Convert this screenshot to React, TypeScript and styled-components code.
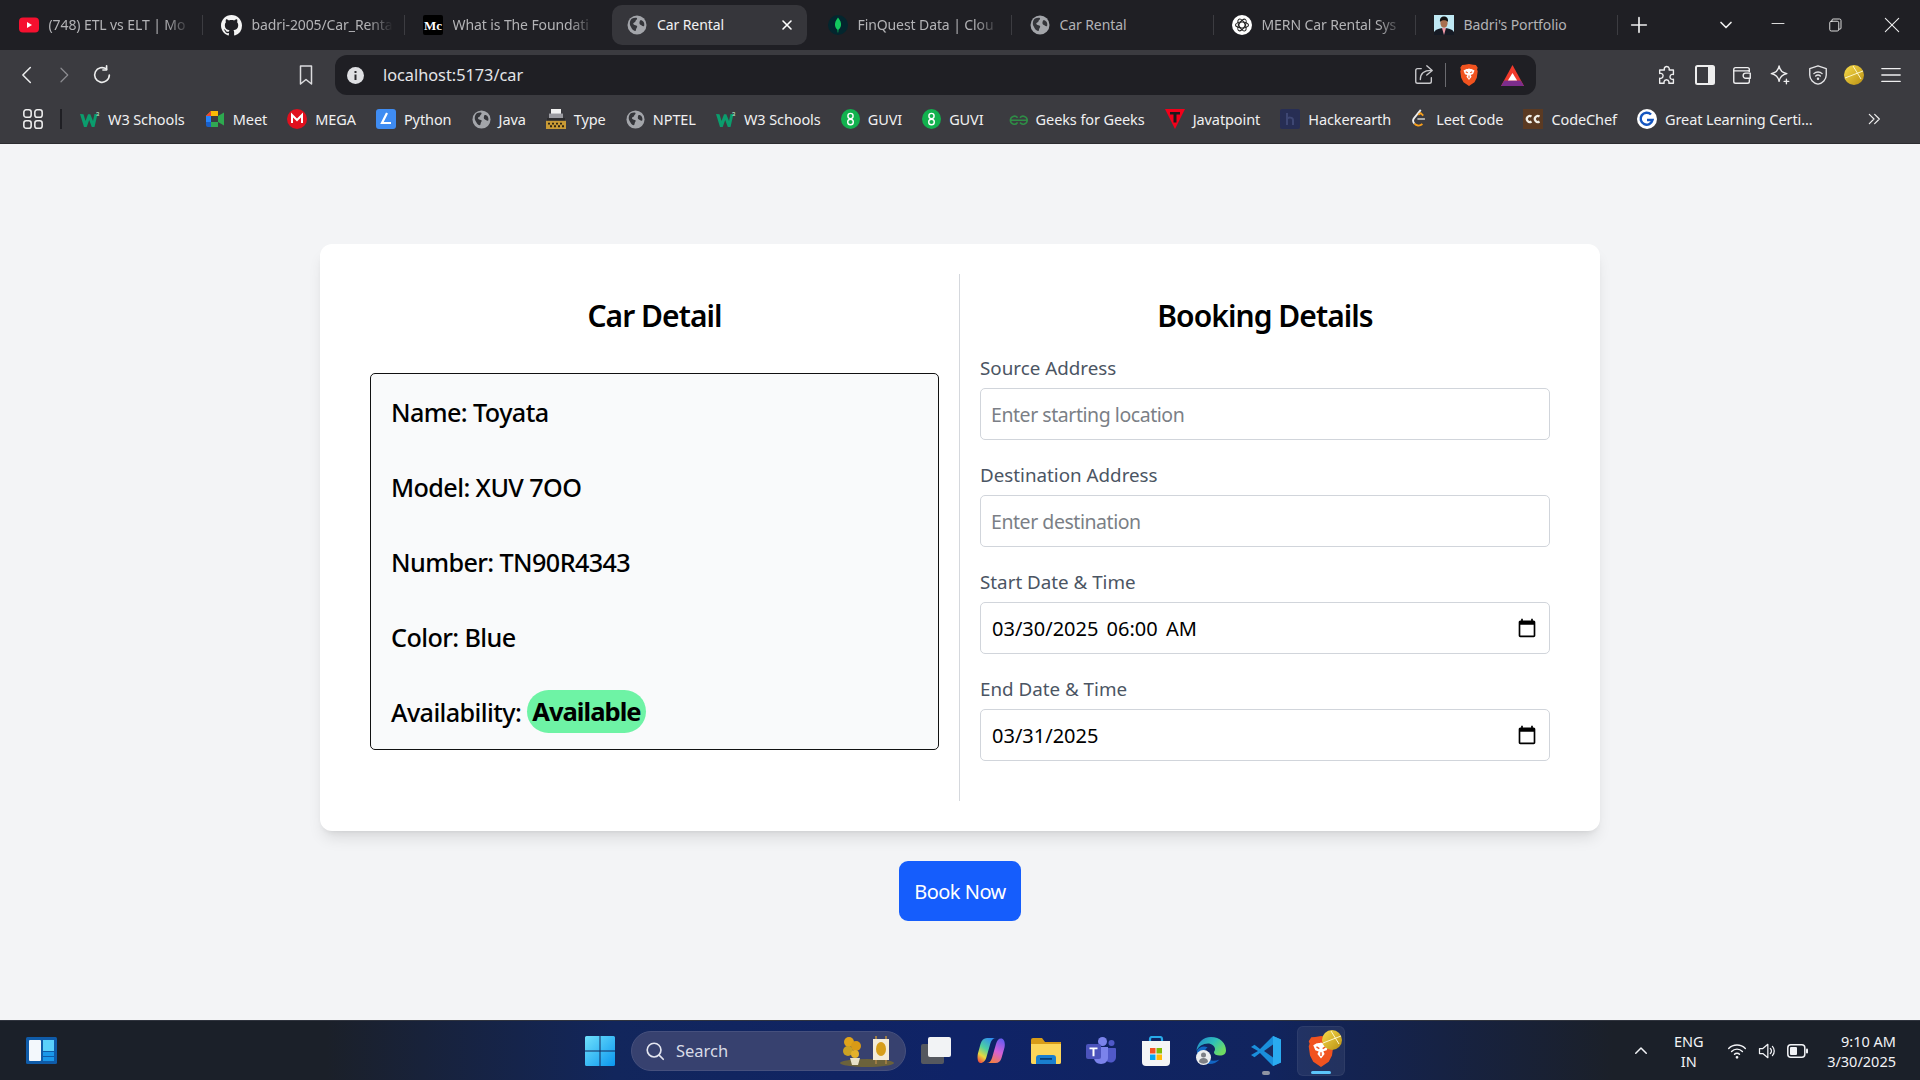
import React from "react";
import styled, { createGlobalStyle } from "styled-components";

const FONT = `"Noto Sans", "Open Sans", sans-serif`;

const Global = createGlobalStyle`
  html, body { margin: 0; padding: 0; background: #f3f4f6; }
  body { font-family: ${FONT}; }
  * { box-sizing: border-box; }
`;

const Shell = styled.div`
  width: 1920px;
  height: 1080px;
  display: flex;
  flex-direction: column;
  overflow: hidden;
`;

/* ---------- tab strip ---------- */
const TabStrip = styled.div`
  height: 50px;
  background: #1f1f24;
  display: flex;
  align-items: center;
  padding-left: 1px;
  flex: none;
`;
const Tab = styled.div<{ $active?: boolean; $noSep?: boolean }>`
  width: ${(p) => (p.$active ? "195px" : "202px")};
  margin: ${(p) => (p.$active ? "0 3px 0 5px" : "0")};
  height: 40px;
  flex: none;
  display: flex;
  align-items: center;
  gap: 10px;
  padding: 0 12px 0 ${(p) => (p.$active ? "15px" : "17.5px")};
  position: relative;
  border-radius: 10px;
  background: ${(p) => (p.$active ? "#36363b" : "transparent")};
  color: ${(p) => (p.$active ? "#f2f2f3" : "#b3b3b6")};
  &::after {
    content: "";
    display: ${(p) => (p.$active || p.$noSep ? "none" : "block")};
    position: absolute;
    right: 0;
    top: 10px;
    width: 1px;
    height: 20px;
    background: #3c3c41;
  }
`;
const TabTitle = styled.span<{ $fade?: boolean }>`
  flex: 1;
  min-width: 0;
  margin-top: -2px;
  white-space: nowrap;
  overflow: hidden;
  font-size: 14px;
  letter-spacing: -0.1px;
  mask-image: ${(p) => (p.$fade ? "linear-gradient(90deg,#000 82%,transparent 100%)" : "none")};
`;
const TabClose = styled.span`
  display: flex;
`;
const NewTab = styled.div`
  margin-left: 10px;
  display: flex;
`;
const StripRight = styled.div`
  margin-left: auto;
  display: flex;
  align-items: center;
  color: #e8e8ea;
`;
const WinBtn = styled.div<{ $w: number }>`
  width: ${(p) => p.$w}px;
  display: flex;
  justify-content: center;
`;

/* ---------- toolbar ---------- */
const Toolbar = styled.div`
  height: 50px;
  flex: none;
  background: #3b3b40;
  display: flex;
  align-items: center;
  padding-left: 17px;
`;
const NavGroup = styled.div`
  display: flex;
  align-items: center;
  gap: 18px;
`;
const BookmarkBtn = styled.div`
  margin-left: 181px;
  display: flex;
`;
const Omnibox = styled.div`
  margin-left: 17px;
  width: 1201px;
  height: 40px;
  background: #1f1f24;
  border-radius: 12px;
  display: flex;
  align-items: center;
  padding: 0 12px 0 12px;
`;
const Url = styled.span`
  margin: -1px 0 0 19px;
  color: #e4e5e8;
  font-size: 16.3px;
  flex: 1;
`;
const OmniSep = styled.span`
  width: 1px;
  height: 24px;
  background: #6a6a6f;
  margin: 0 13px 0 10px;
`;
const OmniGap = styled.span`
  width: 22px;
`;
const ToolRight = styled.div`
  margin-left: 120px;
  display: flex;
  align-items: center;
  gap: 15.7px;
`;

/* ---------- bookmarks ---------- */
const BookmarkBar = styled.div`
  height: 44px;
  flex: none;
  background: #3b3b40;
  border-bottom: 1px solid #2c2c30;
  display: flex;
  align-items: center;
  padding: 0 38px 5px 22px;
  color: #f0f0f1;
`;
const BarSep = styled.span`
  width: 2px;
  height: 20px;
  background: #1f1f24;
  margin: 0 18px 0 16px;
`;
const BookmarkList = styled.div`
  display: flex;
  align-items: center;
  gap: 20.1px;
`;
const Bookmark = styled.div`
  display: flex;
  align-items: center;
  gap: 8px;
  font-size: 14.5px;
  letter-spacing: -0.1px;
  white-space: nowrap;
`;
const More = styled.div`
  margin-left: auto;
  display: flex;
`;

/* ---------- page ---------- */
const Page = styled.main`
  flex: 1;
  background: #f3f4f6;
  display: flex;
  flex-direction: column;
  align-items: center;
  padding-top: 100px;
`;
const Card = styled.section`
  width: 1280px;
  height: 587px;
  padding: 30px;
  background: #fff;
  border-radius: 12px;
  box-shadow: 0 10px 15px -3px rgba(0, 0, 0, 0.1), 0 4px 6px -4px rgba(0, 0, 0, 0.1);
  display: grid;
  grid-template-columns: 1fr 1fr;
`;
const Column = styled.div<{ $divider?: boolean }>`
  padding: 0 20px;
  border-right: ${(p) => (p.$divider ? "1px solid #d5d8dd" : "none")};
`;
const Heading = styled.h2<{ $gap: number }>`
  margin: 20px 0 ${(p) => p.$gap}px;
  height: 43px;
  line-height: 43px;
  text-align: center;
  font-size: 30px;
  font-weight: 600;
  letter-spacing: -0.95px;
  color: #000;
`;
const DetailBox = styled.div`
  height: 377px;
  background: #f9fafb;
  border: 1.5px solid #111;
  border-radius: 5px;
  padding: 0 20px;
  display: grid;
  grid-auto-rows: 75px;
`;
const DetailRow = styled.p`
  margin: 0;
  display: flex;
  align-items: center;
  gap: 6px;
  font-size: 25.2px;
  font-weight: 500;
  letter-spacing: -0.6px;
  color: #000;
`;
const Badge = styled.span`
  background: #6ef3a5;
  border-radius: 22px;
  height: 43px;
  display: flex;
  align-items: center;
  padding: 0 5px;
  font-weight: 700;
  font-size: 25.6px;
  letter-spacing: -1px;
`;
const Field = styled.div`
  margin-bottom: 23px;
`;
const Label = styled.label`
  display: block;
  height: 24px;
  line-height: 24px;
  margin-bottom: 8px;
  font-size: 18.8px;
  color: #4b5563;
`;
const TextInput = styled.input`
  width: 100%;
  height: 52px;
  border: 1px solid #d1d5db;
  border-radius: 5px;
  background: #fff;
  padding: 0 10px;
  font: 19.5px ${FONT};
  letter-spacing: -0.45px;
  outline: none;
  &::placeholder {
    color: #7b7f86;
    opacity: 1;
  }
`;
const DateField = styled.div`
  width: 100%;
  height: 52px;
  border: 1px solid #d1d5db;
  border-radius: 5px;
  background: #fff;
  padding: 0 12px 0 11px;
  display: flex;
  align-items: center;
  justify-content: space-between;
  font-size: 20px;
  word-spacing: 3px;
  color: #000;
`;
const BookButton = styled.button`
  margin-top: 30px;
  width: 122px;
  height: 60px;
  background: #155dfc;
  color: #fff;
  border: none;
  border-radius: 9px;
  font: 20px ${FONT};
  letter-spacing: -0.5px;
`;

/* ---------- taskbar ---------- */
const Taskbar = styled.footer`
  height: 60px;
  flex: none;
  display: flex;
  align-items: center;
  border-top: 1px solid #30343e;
  background: linear-gradient(90deg, #1b2029 0, #1b2029 17%, #12265c 32%, #0f2367 50%, #11245e 66%, #1b2029 84%, #1b2029 100%);
  padding-left: 26px;
  color: #f2f3f6;
`;
const Windows = styled.div`
  margin-left: 528px;
  display: flex;
`;
const SearchPill = styled.div`
  margin-left: 16px;
  width: 275px;
  height: 40px;
  border-radius: 20px;
  background: #37416f;
  border: 1px solid #46507d;
  display: flex;
  align-items: center;
  padding: 0 10px 0 12px;
  gap: 10px;
  font-size: 16.5px;
  color: #d9dbe6;
`;
const SearchText = styled.span`
  flex: 1;
`;
const TaskApps = styled.div`
  margin-left: 15px;
  display: flex;
  align-items: center;
  gap: 25px;
`;
const ActiveApp = styled.div`
  width: 48px;
  height: 50px;
  margin-left: -9px;
  border-radius: 6px;
  background: rgba(255, 255, 255, 0.07);
  border: 1px solid rgba(255, 255, 255, 0.05);
  display: flex;
  align-items: flex-start;
  justify-content: center;
  padding-top: 9px;
  position: relative;
`;
const RunningDot = styled.span<{ $active?: boolean }>`
  position: absolute;
  bottom: ${(p) => (p.$active ? "1px" : "-9px")};
  left: 50%;
  transform: translateX(-50%);
  width: ${(p) => (p.$active ? "20px" : "8px")};
  height: ${(p) => (p.$active ? "3px" : "4px")};
  border-radius: 3px;
  background: ${(p) => (p.$active ? "#5cc5fb" : "#8e94a3")};
`;
const AppSlot = styled.div<{ $ml?: number }>`
  position: relative;
  display: flex;
  margin-left: ${(p) => p.$ml ?? 0}px;
`;
const Tray = styled.div`
  margin-left: auto;
  padding-right: 24px;
  display: flex;
  align-items: center;
`;
const Lang = styled.div`
  margin-left: 24px;
  text-align: center;
  font-size: 14.5px;
  line-height: 20px;
`;
const TrayIcons = styled.div`
  margin-left: 23px;
  display: flex;
  align-items: center;
  gap: 10px;
`;
const Clock = styled.div`
  margin-left: 19.5px;
  text-align: right;
  font-size: 14.5px;
  line-height: 20px;
`;
const BallOverlay = styled.span`
  position: absolute;
  left: 24px;
  top: 3px;
  display: flex;
`;

/* ---------- icons ---------- */
type P = { s?: number };
const Stroke = ({ s = 22, children, w = 1.6, c = "currentColor" }: { s?: number; children: React.ReactNode; w?: number; c?: string }) => (
  <svg width={s} height={s} viewBox="0 0 24 24" fill="none" stroke={c} strokeWidth={w} strokeLinecap="round" strokeLinejoin="round">
    {children}
  </svg>
);
const Globe = ({ s = 20 }: P) => (
  <svg width={s} height={s} viewBox="0 0 20 20">
    <circle cx="10" cy="10" r="9.5" fill="#a3a5aa" />
    <path d="M5 3.5c1.5-.8 3-1 4.5-.8 1 .6.6 1.7-.3 2.3-.9.7-.4 1.8-1.5 2.2-1.4.4-1.9 1.4-1 2.3 1 .9 2.5.5 3.3 1.4.6.8-.3 1.8-.7 2.6-.4 1-.2 2.2-1 2.6C5.5 15.7 4.7 13 3.6 11.3 2.4 9.3 2.5 5.6 5 3.5z" fill="#34353a" />
    <path d="M13 5.5c1.3-.5 2.6.2 3.5 1.3.8 1.3 1 2.8.6 4.2-.8.5-1.7.1-2.4-.5-.9-.7-1.9-.7-2.2-1.9-.2-1 .2-2.3.5-3.1z" fill="#34353a" />
  </svg>
);
const YouTube = () => (
  <svg width="20" height="20" viewBox="0 0 20 20">
    <rect y="2.5" width="20" height="15" rx="4" fill="#f5102f" />
    <path d="M8 7l5 3-5 3z" fill="#fff" />
  </svg>
);
const GitHub = () => (
  <svg width="21" height="21" viewBox="0 0 16 16" fill="#f4f4f4">
    <path d="M8 0C3.58 0 0 3.58 0 8c0 3.54 2.29 6.53 5.47 7.59.4.07.55-.17.55-.38 0-.19-.01-.82-.01-1.49-2.01.37-2.53-.49-2.69-.94-.09-.23-.48-.94-.82-1.13-.28-.15-.68-.52-.01-.53.63-.01 1.08.58 1.23.82.72 1.21 1.87.87 2.33.66.07-.52.28-.87.51-1.07-1.78-.2-3.64-.89-3.64-3.95 0-.87.31-1.59.82-2.15-.08-.2-.36-1.02.08-2.12 0 0 .67-.21 2.2.82.64-.18 1.32-.27 2-.27s1.36.09 2 .27c1.53-1.04 2.2-.82 2.2-.82.44 1.1.16 1.92.08 2.12.51.56.82 1.27.82 2.15 0 3.07-1.87 3.75-3.65 3.95.29.25.54.73.54 1.48 0 1.07-.01 1.93-.01 2.2 0 .21.15.46.55.38A8.01 8.01 0 0 0 16 8c0-4.42-3.58-8-8-8z" />
  </svg>
);
const Medium = () => (
  <svg width="20" height="20" viewBox="0 0 20 20">
    <rect width="20" height="20" rx="2" fill="#000" />
    <text x="1" y="15" fontSize="13" fontWeight="700" fill="#fff" fontFamily="Liberation Serif">Mc</text>
  </svg>
);
const Mongo = () => (
  <svg width="20" height="20" viewBox="0 0 20 20">
    <circle cx="10" cy="10" r="10" fill="#03262e" />
    <path d="M10 2.5c2.5 3 3.3 5.3 3 7.8-.3 2.3-1.5 3.7-2.6 4.5l-.2 2.7h-.5l-.2-2.7C8.4 14 7.2 12.6 7 10.3c-.2-2.5.6-4.8 3-7.8z" fill="#12c95e" />
  </svg>
);
const OpenAIish = () => (
  <svg width="20" height="20" viewBox="0 0 20 20">
    <circle cx="10" cy="10" r="10" fill="#fff" />
    <g fill="none" stroke="#222" strokeWidth="1.1">
      <ellipse cx="10" cy="10" rx="6.5" ry="3" />
      <ellipse cx="10" cy="10" rx="6.5" ry="3" transform="rotate(60 10 10)" />
      <ellipse cx="10" cy="10" rx="6.5" ry="3" transform="rotate(120 10 10)" />
    </g>
  </svg>
);
const Portrait = () => (
  <svg width="20" height="20" viewBox="0 3 20 20">
    <rect y="3" width="20" height="20" fill="#bfe8f4" />
    <path d="M0 23v-3c2-3 6-4 10-4s8 1 10 4v3z" fill="#151a24" />
    <path d="M8 16l2 7 2-7z" fill="#f09aa8" />
    <ellipse cx="10" cy="11" rx="3.6" ry="4.8" fill="#a86f4f" />
    <path d="M6 10c-.5-4 1.5-5.5 4-5.5s4.5 1.5 4 5.5c-1.5-2.5-6.5-2.5-8 0z" fill="#111" />
  </svg>
);
const Brave = ({ w = 20, h = 22 }: { w?: number; h?: number }) => (
  <svg width={w} height={h} viewBox="0 0 20 24">
    <path d="M10 0l4.5.7 3 .3 2 3-.7 2 .7 2-1 7-2.5 5L10 24l-6-4-2.5-5-1-7 .7-2-.7-2 2-3 3-.3z" fill="#f1531f" />
    <path d="M10 5c1 .7 2.3.3 3.3.7l2.7 1.5-1.6 3.8-2.6.9 1 2L10 17.5 7.2 14l1-2-2.6-.9L4 7.2l2.7-1.5c1-.4 2.3 0 3.3-.7z" fill="#fff" />
    <path d="M10 12.5v3M6.5 8.5l2.2 1.2M13.5 8.5l-2.2 1.2" stroke="#f1531f" strokeWidth="1.1" fill="none" />
  </svg>
);
const BatTriangle = () => (
  <svg width="23" height="21" viewBox="0 0 23 21">
    <path d="M11.5 0L23 21H0z" fill="#f13a2c" />
    <path d="M0 21h23l-3.3-5.5H3.3z" fill="#7c2d8c" />
    <path d="M11.5 8l4.6 7.5H6.9z" fill="#fff" />
  </svg>
);
const W3 = () => (
  <svg width="20" height="20" viewBox="0 0 20 20">
    <path d="M0 5l3.5.3L5.5 12 8 5.3h2.3L13 12l1.5-7H17.5L14.5 18h-2.7L9.2 11l-2.5 7H4z" fill="#0b9d6d" />
    <text x="16" y="7" fontSize="6" fill="#cfd" fontFamily="Liberation Sans">3</text>
  </svg>
);
const Meet = () => (
  <svg width="20" height="20" viewBox="0 0 20 20">
    <path d="M6 2h7v5H1l5-5z" fill="#f9bb06" />
    <path d="M1 7h5v6H1z" fill="#2684fc" />
    <path d="M1 13h5v5H3a2 2 0 0 1-2-2z" fill="#1a5fc7" />
    <path d="M6 13h7v5H6z" fill="#30a852" />
    <path d="M13 7l6-3.5v13L13 13z" fill="#2da94f" />
    <path d="M1 7l5-5v5z" fill="#ea4335" />
  </svg>
);
const Mega = () => (
  <svg width="20" height="20" viewBox="0 0 20 20">
    <circle cx="10" cy="10" r="10" fill="#e0101e" />
    <path d="M5 14V6l5 5 5-5v8" fill="none" stroke="#fff" strokeWidth="2" />
  </svg>
);
const Python = () => (
  <svg width="20" height="20" viewBox="0 0 20 20">
    <rect width="20" height="20" rx="3" fill="#3f8cf2" />
    <path d="M11 4L6 14h9" fill="none" stroke="#fff" strokeWidth="2.2" />
  </svg>
);
const Typewriter = () => (
  <svg width="20" height="20" viewBox="0 0 20 22" preserveAspectRatio="none">
    <path d="M5 0h10v6H5z" fill="#f1f1f1" />
    <path d="M3 5h14v5H3z" fill="#9a9aa0" />
    <path d="M1 10h18v3H1z" fill="#2c2c2e" />
    <path d="M0 13h20v9H0z" fill="#c89a35" />
    <path d="M2 15h2v2H2zM6 15h2v2H6zM10 15h2v2h-2zM14 15h2v2h-2zM4 18h2v2H4zM8 18h2v2H8zM12 18h2v2h-2zM16 18h2v2h-2z" fill="#2f2614" />
  </svg>
);
const Guvi = () => (
  <svg width="19" height="20" viewBox="0 0 19 20">
    <ellipse cx="9.5" cy="10" rx="9.5" ry="10" fill="#12b14e" />
    <circle cx="9.5" cy="7" r="2.6" fill="none" stroke="#fff" strokeWidth="1.4" />
    <circle cx="9.5" cy="13" r="2.8" fill="none" stroke="#fff" strokeWidth="1.4" />
  </svg>
);
const Gfg = () => (
  <svg width="24" height="20" viewBox="-6.5 -2 30 25" fill="none" stroke="#2f8d46" strokeWidth="2">
    <path d="M1 12h22M1.5 12a5 5 0 0 1 9-3M1.5 12a5 5 0 0 0 9 3M22.5 12a5 5 0 0 0-9-3M22.5 12a5 5 0 0 1-9 3" />
  </svg>
);
const Jt = () => (
  <svg width="20" height="20" viewBox="0 0 20 20">
    <path d="M0 0h20L10 20z" fill="#f3001a" />
    <path d="M5 3h10v2.5h-3.5v8h-3v-8H5z" fill="#1a1a1c" />
  </svg>
);
const Hacker = () => (
  <svg width="20" height="20" viewBox="0 0 20 20">
    <rect width="20" height="20" rx="2" fill="#272e54" />
    <path d="M7 4v12M7 10c1-2 6-2 6 1v5" fill="none" stroke="#3e4773" strokeWidth="2" />
  </svg>
);
const Leet = () => (
  <svg width="17" height="20" viewBox="0 0 19 24" fill="none" strokeWidth="2.2">
    <path d="M11 1L3 11c-2 2.5-1 5 .5 6.5" stroke="#eee" />
    <path d="M7 12h9" stroke="#b5b5b5" />
    <path d="M3.5 17.5c2 2.5 6 3.5 9.5.5" stroke="#f89f1b" />
    <path d="M8 7l3-2 3 3" stroke="#f89f1b" />
  </svg>
);
const CodeChef = () => (
  <svg width="20" height="20" viewBox="0 0 20 20">
    <rect width="20" height="20" fill="#5b3a22" />
    <path d="M8.5 7.5a3 3 0 1 0 0 5M16.5 7.5a3 3 0 1 0 0 5" fill="none" stroke="#f1efe8" strokeWidth="2.2" />
  </svg>
);
const Great = () => (
  <svg width="20" height="20" viewBox="0 0 20 20">
    <circle cx="10" cy="10" r="10" fill="#fff" />
    <path d="M14 5.5a6 6 0 1 0 1.5 5.5H10" fill="none" stroke="#1556c0" strokeWidth="2.5" />
  </svg>
);
const Calendar = () => (
  <svg width="20" height="20" viewBox="0 0 24 24" fill="#000">
    <path d="M20 3h-1V1h-2v2H7V1H5v2H4c-1.1 0-2 .9-2 2v16c0 1.1.9 2 2 2h16c1.1 0 2-.9 2-2V5c0-1.1-.9-2-2-2zm0 18H4V8h16v13z" />
  </svg>
);
const WidgetsIcon = () => (
  <svg width="31" height="27" viewBox="0 0 31 27">
    <rect width="31" height="27" rx="1.5" fill="#0f5ba8" />
    <rect x="3" y="3" width="12" height="21" rx="1" fill="#f3f8fc" />
    <rect x="17" y="3" width="11" height="11" fill="#5ad0fb" />
    <rect x="17" y="15" width="11" height="4" fill="#1a98ea" />
    <rect x="17" y="20" width="11" height="4" fill="#1a98ea" />
  </svg>
);
const WinLogo = () => (
  <svg width="30" height="30" viewBox="0 0 30 30">
    <defs>
      <linearGradient id="wl" x1="0" y1="0" x2="1" y2="1">
        <stop offset="0" stopColor="#6fe0fb" />
        <stop offset="1" stopColor="#0a97ef" />
      </linearGradient>
    </defs>
    <path d="M0 1.5A1.5 1.5 0 0 1 1.5 0H14.5v14.5H0zM15.5 0h13A1.5 1.5 0 0 1 30 1.5v13H15.5zM0 15.5h14.5V30H1.5A1.5 1.5 0 0 1 0 28.5zM15.5 15.5H30v13a1.5 1.5 0 0 1-1.5 1.5h-13z" fill="url(#wl)" />
  </svg>
);
const Sunflowers = () => (
  <svg width="56" height="36" viewBox="0 0 56 36">
    <ellipse cx="28" cy="30" rx="27" ry="4" fill="#6b623b" />
    <circle cx="10" cy="9" r="5" fill="#e0a31a" />
    <circle cx="17" cy="13" r="5" fill="#d89a17" />
    <circle cx="9" cy="18" r="5" fill="#caa123" />
    <circle cx="16" cy="21" r="4" fill="#e2b02a" />
    <path d="M11 25h10l-2 7h-6z" fill="#e7e1c8" />
    <path d="M36 3h2v28h-2zM46 3h2v28h-2z" fill="#9c7b44" />
    <rect x="34" y="6" width="16" height="21" fill="#f3ecd8" />
    <ellipse cx="42" cy="16" rx="5" ry="7" fill="#d69e1a" />
  </svg>
);
const TaskView = () => (
  <svg width="30" height="27" viewBox="0 0 30 27">
    <rect x="0" y="7" width="23" height="20" rx="2" fill="#55585f" />
    <rect x="7" y="0" width="23" height="20" rx="2" fill="#f2f3f5" />
  </svg>
);
const Copilot = () => (
  <svg width="28" height="25" viewBox="0 0 28 25">
    <defs>
      <linearGradient id="co" x1="0.7" y1="0" x2="0.2" y2="1">
        <stop offset="0" stopColor="#2f8ff0" />
        <stop offset=".45" stopColor="#4fd0a0" />
        <stop offset=".75" stopColor="#e8d83f" />
        <stop offset="1" stopColor="#f0553f" />
      </linearGradient>
      <linearGradient id="co2" x1="0.7" y1="0" x2="0.3" y2="1">
        <stop offset="0" stopColor="#6a5cf0" />
        <stop offset=".5" stopColor="#d460d8" />
        <stop offset="1" stopColor="#f2803f" />
      </linearGradient>
    </defs>
    <path d="M10 0h9c-3 0-4.5 2-5.5 5l-4 14c-1 3.5-3 6-6 6C1 25 0 21 .8 16L3.5 6C4.5 2 7 0 10 0z" fill="url(#co)" />
    <path d="M18 25H9.5c3 0 4.5-2 5.5-5l4-14c1-3.5 2.500-5.500 5-5.500 3 0 4.500 4 3.500 9l-3 10.500c-1 3.500-3 5-6 5z" fill="url(#co2)" />
  </svg>
);
const Explorer = () => (
  <svg width="30" height="26" viewBox="0 0 30 26">
    <path d="M0 2a2 2 0 0 1 2-2h9l3 4h16v20a2 2 0 0 1-2 2H2a2 2 0 0 1-2-2z" fill="#d89c18" />
    <path d="M0 6h30v18a2 2 0 0 1-2 2H2a2 2 0 0 1-2-2z" fill="#fcd65a" />
    <path d="M5 26v-6a3 3 0 0 1 3-3h14a3 3 0 0 1 3 3v6z" fill="#1a7fcf" />
    <rect x="9" y="20" width="12" height="1.8" fill="#063f78" />
  </svg>
);
const Teams = () => (
  <svg width="30" height="27" viewBox="0 0 30 27">
    <circle cx="16.5" cy="4.5" r="4.5" fill="#7b83eb" />
    <circle cx="25.5" cy="6" r="3" fill="#5059c9" />
    <path d="M19 11h10a1 1 0 0 1 1 1v8c0 3.5-2.5 5.5-5.5 5.5-2 0-4-1-5-3z" fill="#5059c9" />
    <path d="M8 10h14v11c0 3-3 6-7 6-4 0-7-3-7-6z" fill="#7b83eb" />
    <rect y="7" width="15" height="15" rx="2" fill="#4b53bc" />
    <path d="M3.5 10.5h8v1.8H8.5v7h-2v-7h-3z" fill="#fff" />
  </svg>
);
const Store = () => (
  <svg width="30" height="30" viewBox="0 0 30 30">
    <path d="M9 5V3a2 2 0 0 1 2-2h8a2 2 0 0 1 2 2v2" fill="none" stroke="#27a9e8" strokeWidth="2.2" />
    <path d="M1 5h28v21a4 4 0 0 1-4 4H5a4 4 0 0 1-4-4z" fill="#f4f5f6" />
    <path d="M9 12h5.5v5.5H9z" fill="#f35325" />
    <path d="M15.5 12H21v5.5h-5.5z" fill="#81bc06" />
    <path d="M9 18.5h5.5V24H9z" fill="#05a6f0" />
    <path d="M15.5 18.5H21V24h-5.5z" fill="#ffba08" />
  </svg>
);
const Edge = () => (
  <svg width="30" height="28" viewBox="0 0 30 28">
    <defs>
      <linearGradient id="ed" x1="0" y1="0" x2="1" y2="0.6">
        <stop offset="0" stopColor="#1f80d0" />
        <stop offset=".55" stopColor="#2fc0b8" />
        <stop offset="1" stopColor="#6fdc62" />
      </linearGradient>
    </defs>
    <path d="M15 0C24 0 30 6 30 13.5c0 3-2 5-6.5 5-3 0-5.5-1-5.5-3 0-1.5 1-1.5 1-3.5 0-3-3.5-5.5-7-5.500C7 6.500 2 9.500.5 14 1 6 7 0 15 0z" fill="url(#ed)" />
    <path d="M1 14c1-3 4-4.500 7-4.500 2.500 0 3.500 1 3.500 1-3 2-3.500 6-2 9 2 4 8 5.500 14 3-3 3-6 4.500-10 4.500C6 28 .5 22 1 14z" fill="#1266c4" />
    <circle cx="7.5" cy="20.5" r="7.5" fill="#eceef0" />
    <circle cx="7.5" cy="18" r="2.5" fill="#7d8086" />
    <path d="M3 25c0-3 2-4 4.5-4s4.5 1 4.5 4a7 7 0 0 1-9 0z" fill="#7d8086" />
  </svg>
);
const VSCode = () => (
  <svg width="30" height="30" viewBox="0 0 30 30">
    <path d="M22 0l8 3.5v23L22 30 9 17l-5.5 4.3L0 19l7-4-7-4 3.5-2.3L9 13z" fill="#1a8fdc" />
    <path d="M22 8.5L13 15l9 6.5z" fill="#1b2a5e" />
    <path d="M22 0l8 3.5v23L22 30z" fill="#2aabf0" />
  </svg>
);
const GoldBall = ({ s = 20 }: P) => (
  <svg width={s} height={s} viewBox="0 0 20 20">
    <defs>
      <linearGradient id="gb" x1="0" y1="0" x2="1" y2="1">
        <stop offset="0" stopColor="#f8dc4b" />
        <stop offset="1" stopColor="#b98f12" />
      </linearGradient>
    </defs>
    <circle cx="10" cy="10" r="10" fill="url(#gb)" />
    <path d="M1 13L19 6M9 1l8 13" stroke="#fdf6c8" strokeWidth="1" fill="none" />
  </svg>
);

const tabs: { t: string; i: React.ReactNode; active?: boolean; fade?: boolean; noSep?: boolean }[] = [
  { t: "(748) ETL vs ELT | Mo", i: <YouTube />, fade: true },
  { t: "badri-2005/Car_Renta", i: <GitHub />, fade: true },
  { t: "What is The Foundati", i: <Medium />, fade: true, noSep: true },
  { t: "Car Rental", i: <Globe />, active: true },
  { t: "FinQuest Data | Clou", i: <Mongo />, fade: true },
  { t: "Car Rental", i: <Globe /> },
  { t: "MERN Car Rental Sys", i: <OpenAIish />, fade: true },
  { t: "Badri's Portfolio", i: <Portrait /> },
];

const bookmarks: { t: string; i: React.ReactNode }[] = [
  { t: "W3 Schools", i: <W3 /> },
  { t: "Meet", i: <Meet /> },
  { t: "MEGA", i: <Mega /> },
  { t: "Python", i: <Python /> },
  { t: "Java", i: <Globe s={19} /> },
  { t: "Type", i: <Typewriter /> },
  { t: "NPTEL", i: <Globe s={19} /> },
  { t: "W3 Schools", i: <W3 /> },
  { t: "GUVI", i: <Guvi /> },
  { t: "GUVI", i: <Guvi /> },
  { t: "Geeks for Geeks", i: <Gfg /> },
  { t: "Javatpoint", i: <Jt /> },
  { t: "Hackerearth", i: <Hacker /> },
  { t: "Leet Code", i: <Leet /> },
  { t: "CodeChef", i: <CodeChef /> },
  { t: "Great Learning Certi...", i: <Great /> },
];

export default function App() {
  return (
    <Shell>
      <Global />
      <TabStrip>
        {tabs.map((x, i) => (
          <Tab key={i} $active={x.active} $noSep={x.noSep}>
            {x.i}
            <TabTitle $fade={x.fade}>{x.t}</TabTitle>
            {x.active && (
              <TabClose>
                <Stroke s={16} w={2.4} c="#fff"><path d="M6 6l12 12M18 6L6 18" /></Stroke>
              </TabClose>
            )}
          </Tab>
        ))}
        <NewTab>
          <Stroke s={22} w={1.8} c="#eee"><path d="M12 4v16M4 12h16" /></Stroke>
        </NewTab>
        <StripRight>
          <WinBtn $w={47}><Stroke s={20} w={2} c="#eee"><path d="M6 9l6 6 6-6" /></Stroke></WinBtn>
          <WinBtn $w={57}><Stroke s={18} w={1.2} c="#eee"><path d="M4 10h16" /></Stroke></WinBtn>
          <WinBtn $w={57}>
            <Stroke s={18} w={1.2} c="#eee"><rect x="5" y="7" width="12" height="13" rx="2" /><path d="M8 7V5.5A1.5 1.5 0 0 1 9.5 4H18a2 2 0 0 1 2 2v10a1.5 1.5 0 0 1-1.5 1.5H17" /></Stroke>
          </WinBtn>
          <WinBtn $w={57}><Stroke s={20} w={1.3} c="#eee"><path d="M4 4l16 16M20 4L4 20" /></Stroke></WinBtn>
        </StripRight>
      </TabStrip>

      <Toolbar>
        <NavGroup>
          <Stroke s={20} w={1.8} c="#eceded"><path d="M16 3L7 12l9 9" /></Stroke>
          <Stroke s={18} w={1.6} c="#8d8d91"><path d="M8 3l9 9-9 9" /></Stroke>
          <Stroke s={22} w={1.8} c="#eceded"><path d="M20 12a8 8 0 1 1-3-6.3" /><path d="M17 2v4.5h-4" /></Stroke>
        </NavGroup>
        <BookmarkBtn>
          <Stroke s={24} w={1.5} c="#dcdcde"><path d="M6.5 3h11v18L12 16.5 6.5 21z" /></Stroke>
        </BookmarkBtn>
        <Omnibox>
          <svg width="17" height="17" viewBox="0 0 17 17">
            <circle cx="8.5" cy="8.5" r="8.5" fill="#dfe0e3" />
            <path d="M7.5 7.5h2v5.5h-2zM7.5 4h2v2h-2z" fill="#2a2a2e" />
          </svg>
          <Url>localhost:5173/car</Url>
          <Stroke s={22} w={1.5} c="#c9c9cc">
            <path d="M9 5H5a2 2 0 0 0-2 2v12a2 2 0 0 0 2 2h13a2 2 0 0 0 2-2v-4" />
            <path d="M8 17c0-6 4-10 12-10" />
            <path d="M15 2l6 5-6 5" />
          </Stroke>
          <OmniSep />
          <Brave />
          <OmniGap />
          <BatTriangle />
        </Omnibox>
        <ToolRight>
          <Stroke s={22} w={1.5} c="#eeeeef"><path d="M9 5a2.8 2.8 0 0 1 5.5 0c0 .5-.2 1-.2 1.5H19v5c-.5 0-1-.2-1.5-.2a2.8 2.8 0 0 0 0 5.5c.5 0 1-.2 1.5-.2V21h-5c0-.5.2-1 .2-1.5a2.8 2.8 0 0 0-5.5 0c0 .5.2 1 .2 1.5H4v-5.500c.5 0 1 .2 1.500.2a2.800 2.800 0 0 0 0-5.500c-.5 0-1 .2-1.500.2V6.500h5.200C9.200 6 9 5.500 9 5z" /></Stroke>
          <svg width="22" height="22" viewBox="0 0 22 22">
            <rect x="2" y="2" width="18" height="18" rx="1.5" fill="none" stroke="#eee" strokeWidth="2" />
            <rect x="14" y="2" width="6" height="18" fill="#eee" />
          </svg>
          <Stroke s={22} w={1.5} c="#eeeeef"><path d="M20 8V6a2 2 0 0 0-2-2H5a2 2 0 0 0-2 2v13a2 2 0 0 0 2 2h13a2 2 0 0 0 2-2v-2" /><path d="M3 7.5h15a2 2 0 0 1 2 .5M21 10h-5a2.5 2.5 0 0 0 0 5.5h5z" /></Stroke>
          <Stroke s={22} w={1.5} c="#eeeeef"><path d="M11 2c.8 5 3.5 7.5 8.5 8.5-5 1-7.7 3.5-8.5 8.5-.8-5-3.5-7.5-8.5-8.500 5-1 7.700-3.500 8.500-8.500z" /><path d="M19 16.5v5M16.5 19h5" /></Stroke>
          <Stroke s={22} w={1.5} c="#e4e4e6"><path d="M12 2l9 3v7c0 5-4 9-9 10-5-1-9-5-9-10V5z" /><path d="M7.5 10.5a6.5 6.5 0 0 1 9 0M9.5 13a3.5 3.5 0 0 1 5 0" /><circle cx="12" cy="16" r=".6" /></Stroke>
          <GoldBall />
          <Stroke s={22} w={1.5} c="#eeeeef"><path d="M2 5h20M2 12h20M2 19h20" /></Stroke>
        </ToolRight>
      </Toolbar>

      <BookmarkBar>
        <Stroke s={22} w={1.7} c="#eee">
          <rect x="2" y="2" width="8" height="8" rx="2.5" /><rect x="14" y="2" width="8" height="8" rx="2.5" />
          <rect x="2" y="14" width="8" height="8" rx="2.5" /><rect x="14" y="14" width="8" height="8" rx="2.5" />
        </Stroke>
        <BarSep />
        <BookmarkList>
          {bookmarks.map((b, i) => (
            <Bookmark key={i}>
              {b.i}
              <span>{b.t}</span>
            </Bookmark>
          ))}
        </BookmarkList>
        <More>
          <Stroke s={16} w={1.8} c="#eee"><path d="M5 5l7 7-7 7M13 5l7 7-7 7" /></Stroke>
        </More>
      </BookmarkBar>

      <Page>
        <Card>
          <Column $divider>
            <Heading $gap={36}>Car Detail</Heading>
            <DetailBox>
              <DetailRow>Name: Toyata</DetailRow>
              <DetailRow>Model: XUV 7OO</DetailRow>
              <DetailRow>Number: TN90R4343</DetailRow>
              <DetailRow>Color: Blue</DetailRow>
              <DetailRow>Availability: <Badge>Available</Badge></DetailRow>
            </DetailBox>
          </Column>
          <Column>
            <Heading $gap={19}>Booking Details</Heading>
            <Field>
              <Label>Source Address</Label>
              <TextInput placeholder="Enter starting location" />
            </Field>
            <Field>
              <Label>Destination Address</Label>
              <TextInput placeholder="Enter destination" />
            </Field>
            <Field>
              <Label>Start Date &amp; Time</Label>
              <DateField>03/30/2025 06:00 AM<Calendar /></DateField>
            </Field>
            <Field>
              <Label>End Date &amp; Time</Label>
              <DateField>03/31/2025<Calendar /></DateField>
            </Field>
          </Column>
        </Card>
        <BookButton>Book Now</BookButton>
      </Page>

      <Taskbar>
        <WidgetsIcon />
        <Windows><WinLogo /></Windows>
        <SearchPill>
          <Stroke s={22} w={1.8} c="#e4e6f0"><circle cx="11" cy="11" r="7.5" /><path d="M16.5 16.5L21 21" /></Stroke>
          <SearchText>Search</SearchText>
          <Sunflowers />
        </SearchPill>
        <TaskApps>
          <TaskView />
          <AppSlot $ml={1}><Copilot /></AppSlot>
          <AppSlot $ml={1}><Explorer /></AppSlot>
          <Teams />
          <Store />
          <Edge />
          <AppSlot>
            <VSCode />
            <RunningDot />
          </AppSlot>
          <ActiveApp>
            <Brave w={26} h={31} />
            <BallOverlay><GoldBall /></BallOverlay>
            <RunningDot $active />
          </ActiveApp>
        </TaskApps>
        <Tray>
          <Stroke s={18} w={2} c="#f2f3f6"><path d="M5 15l7-7 7 7" /></Stroke>
          <Lang>ENG<br />IN</Lang>
          <TrayIcons>
            <Stroke s={20} w={1.7} c="#f2f3f6"><path d="M2 9a14 14 0 0 1 20 0M5.5 12.5a9 9 0 0 1 13 0M9 16a4 4 0 0 1 6 0" /><circle cx="12" cy="19.5" r=".8" /></Stroke>
            <Stroke s={20} w={1.5} c="#f2f3f6"><path d="M3 9v6h4l6 5V4L7 9zM16 9a4 4 0 0 1 0 6M18.5 6.5a8 8 0 0 1 0 11" /></Stroke>
            <svg width="21" height="14" viewBox="0 0 21 14">
              <rect x=".8" y=".8" width="17" height="12.4" rx="3" fill="none" stroke="#f2f3f6" strokeWidth="1.5" />
              <rect x="3" y="3" width="7" height="8" rx="1" fill="#f2f3f6" />
              <rect x="19" y="4.5" width="2" height="5" rx="1" fill="#f2f3f6" />
            </svg>
          </TrayIcons>
          <Clock>9:10 AM<br />3/30/2025</Clock>
        </Tray>
      </Taskbar>
    </Shell>
  );
}
